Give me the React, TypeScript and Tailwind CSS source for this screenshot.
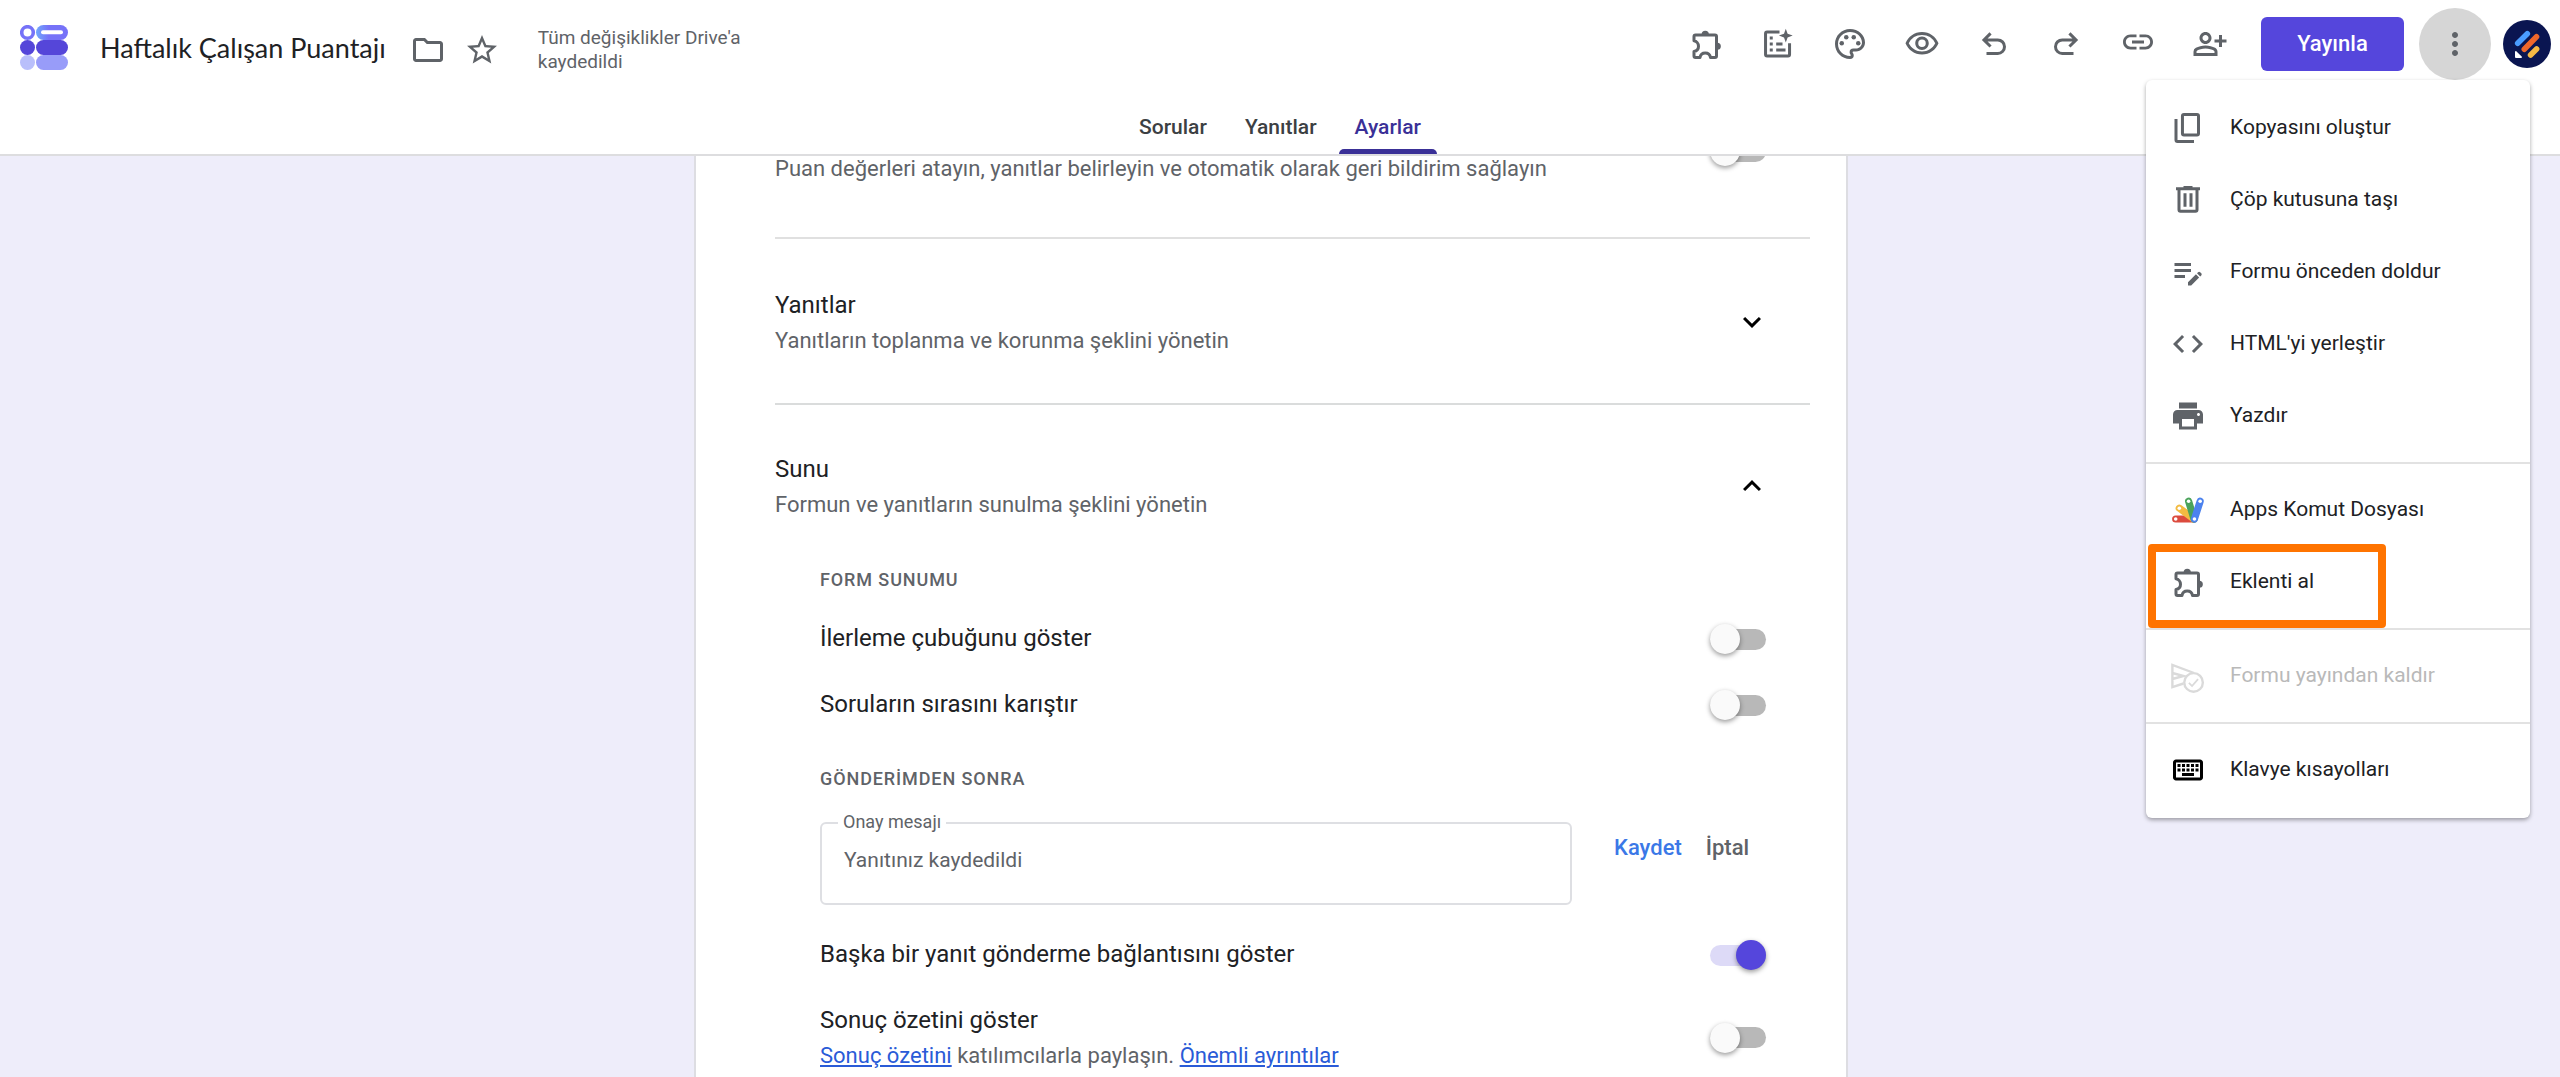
import { useState, type ReactNode } from "react";
import clsx from "clsx";
import {
  MdCode,
  MdExpandLess,
  MdExpandMore,
  MdLink,
  MdMoreVert,
  MdOutlineEditNote,
  MdOutlineFolder,
  MdOutlineKeyboard,
  MdOutlinePalette,
  MdOutlinePersonAddAlt,
  MdOutlineVisibility,
  MdPrint,
  MdStarBorder,
} from "react-icons/md";

const LineIcon = ({ children }: { children: ReactNode }) => (
  <svg
    className="size-9"
    viewBox="0 0 24 24"
    fill="none"
    stroke="currentColor"
    strokeWidth="2"
  >
    {children}
  </svg>
);

const PuzzleIcon = () => (
  <LineIcon>
    <path
      strokeLinejoin="round"
      d="M4 9.9V7a1 1 0 0 1 1-1h13a1 1 0 0 1 1 1v13a1 1 0 0 1-1 1h-3c-.3-1.7-1.6-3-3.500-3S8.300 19.300 8 21H5a1 1 0 0 1-1-1v-3c1.700-.3 3-1.700 3-3.500S5.700 10.200 4 9.900z"
    />
    <path
      stroke="none"
      fill="currentColor"
      d="M9.100 5.500a2.400 2.400 0 0 1 4.800 0zM19.500 11.100a2.400 2.400 0 0 1 0 4.800z"
    />
  </LineIcon>
);

const FormSparkIcon = () => (
  <LineIcon>
    <path d="M13 4H4.700a1 1 0 0 0-1 1v14a1 1 0 0 0 1 1h14a1 1 0 0 0 1-1v-7.500M10.800 12H15M10.800 16H17M6.500 8h2M6.500 12h2M6.500 16h2" />
    <path
      stroke="none"
      fill="currentColor"
      d="M17.200 1.800l1.200 3.400 3.400 1.200-3.400 1.200-1.200 3.400L16 7.600l-3.400-1.200L16 5.200z"
    />
  </LineIcon>
);

const UndoIcon = () => (
  <LineIcon>
    <path d="M5.300 9.300h9.200a4.500 4.500 0 0 1 0 9H7M9.700 4.900 5.300 9.300l4.400 4.400" />
  </LineIcon>
);

const RedoIcon = () => (
  <LineIcon>
    <path d="M18.700 9.300H9.500a4.500 4.500 0 0 0 0 9H17M14.300 4.900l4.400 4.400-4.400 4.400" />
  </LineIcon>
);

const CopyIcon = () => (
  <LineIcon>
    <rect x="8.300" y="3" width="10.700" height="13.600" rx="1" />
    <path d="M4 6v14a1 1 0 0 0 1 1h11" />
  </LineIcon>
);

const TrashIcon = () => (
  <LineIcon>
    <path d="M4 4.500h16M9 3.600h6M6 5v13.500a1 1 0 0 0 1 1h10a1 1 0 0 0 1-1V5M10 7.500v9M14 7.500v9" />
  </LineIcon>
);

const UnpublishIcon = () => (
  <LineIcon>
    <path
      strokeWidth="1.600"
      d="M9 17 1.600 19.400V4.600L16 10M1.600 4.600V10l7.400 2-7.400 2"
    />
    <circle cx="15.700" cy="16.300" r="6.200" strokeWidth="1.600" fill="#fff" />
    <path strokeWidth="1.200" d="m12.600 16.600 2.100 2.100 4-4.600" />
  </LineIcon>
);

const AppsScriptIcon = () => (
  <svg className="size-9" viewBox="0 0 24 24" strokeLinecap="round">
    <path stroke="#dc4b3e" strokeWidth="4.800" d="M3.800 18h12" />
    <path stroke="#f3bb42" strokeWidth="4.800" d="M6.200 10.800 16 18" />
    <path stroke="#4aa35a" strokeWidth="4.800" d="M12.400 6.200 16 18" />
    <path stroke="#4c82ee" strokeWidth="4.800" d="M20.100 6.200 16.300 18" />
    <g fill="#fff">
      <circle cx="3.800" cy="18" r="1.200" />
      <circle cx="6.200" cy="10.800" r="1.200" />
      <circle cx="12.400" cy="6.200" r="1.200" />
      <circle cx="20.100" cy="6.200" r="1.200" />
      <circle cx="16.300" cy="18" r="1.200" />
    </g>
  </svg>
);

const FormsLogo = () => (
  <svg className="h-[45px] w-12" viewBox="0 0 48 45">
    <defs>
      <linearGradient id="logoTop" x1="0" x2="1">
        <stop offset="0" stopColor="#6fa8fb" />
        <stop offset="0.4" stopColor="#7672f8" />
      </linearGradient>
    </defs>
    <circle cx="7.500" cy="7.500" r="5.800" fill="none" stroke="#7672f8" strokeWidth="3.600" />
    <rect x="16" width="32" height="15" rx="7.500" fill="url(#logoTop)" />
    <rect x="21" y="5.300" width="22" height="4" rx="2" fill="#fff" />
    <circle cx="7.500" cy="22.500" r="7.500" fill="#5546d9" />
    <rect x="16" y="15" width="32" height="15" rx="7.500" fill="#5546d9" />
    <circle cx="7.500" cy="37.500" r="7.500" fill="#b9bffb" />
    <rect x="16" y="30" width="32" height="15" rx="7.500" fill="#989cf9" />
  </svg>
);

const Avatar = () => (
  <svg className="size-12" viewBox="0 0 48 48" strokeLinecap="round">
    <circle cx="24" cy="24" r="24" fill="#0a1551" />
    <path stroke="#4a9cff" strokeWidth="5.600" d="m14.700 23.200 9.600-9.500" />
    <path stroke="#f0672b" strokeWidth="5.600" d="M21.300 29.200 33.500 16.800" />
    <path stroke="#f5b945" strokeWidth="5.600" d="m27.600 35 6-6" />
    <path fill="#fff" d="M12 32c0-.8.9-1.200 1.500-.6l5.200 5.200c.6.600.2 1.400-.6 1.400H13a1 1 0 0 1-1-1z" />
  </svg>
);

const toolbar = [
  { label: "Eklentiler", icon: <PuzzleIcon /> },
  { label: "Form oluştur", icon: <FormSparkIcon /> },
  { label: "Temayı özelleştir", icon: <MdOutlinePalette className="size-9" /> },
  { label: "Önizleme", icon: <MdOutlineVisibility className="size-9" /> },
  { label: "Geri al", icon: <UndoIcon /> },
  { label: "Yinele", icon: <RedoIcon /> },
  { label: "Bağlantıyı kopyala", icon: <MdLink className="mb-1 size-9" /> },
  { label: "Paylaş", icon: <MdOutlinePersonAddAlt className="size-9" /> },
];

const tabs = ["Sorular", "Yanıtlar", "Ayarlar"];

const Header = () => {
  const [activeTab, setActiveTab] = useState("Ayarlar");

  return (
    <header className="z-10 shrink-0 border-b-2 border-[#dddddf] bg-white">
      <div className="flex h-[87px] items-center justify-between pr-[9px] pl-5">
        <div className="flex items-center pt-3">
          <div className="pb-1">
            <FormsLogo />
          </div>
          <h1 className="ml-8 pb-1 font-['Lato',sans-serif] text-[27px] leading-9 text-[#202124]">
            Haftalık Çalışan Puantajı
          </h1>
          <button className="ml-6 text-[#5f6368]" aria-label="Taşı">
            <MdOutlineFolder className="size-9" />
          </button>
          <button className="ml-[18px] text-[#5f6368]" aria-label="Yıldız ekle">
            <MdStarBorder className="size-9" />
          </button>
          <p className="ml-[38px] w-60 text-[19px] leading-6 text-[#5f6368]">
            Tüm değişiklikler Drive'a kaydedildi
          </p>
        </div>
        <div className="flex items-center">
          <div className="flex gap-9 text-[#5f6368]">
            {toolbar.map(({ label, icon }) => (
              <button key={label} aria-label={label}>
                {icon}
              </button>
            ))}
          </div>
          <button className="ml-[33px] h-[54px] w-[143px] rounded-md bg-[#5546dc] text-[22px] font-medium text-white">
            Yayınla
          </button>
          <button
            className="ml-[15px] flex size-[72px] items-center justify-center rounded-full bg-[#d6d6d6] text-[#5f6368]"
            aria-label="Diğer"
          >
            <MdMoreVert className="size-9" />
          </button>
          <button className="ml-3" aria-label="Hesap">
            <Avatar />
          </button>
        </div>
      </div>
      <nav className="flex h-[67px] items-end justify-center gap-[6px]">
        {tabs.map((tab) => (
          <button
            key={tab}
            onClick={() => setActiveTab(tab)}
            className={clsx(
              "flex flex-col items-stretch text-[21px] leading-[30px] font-medium",
              tab === activeTab ? "text-[#3a3097]" : "text-[#3c4043]"
            )}
          >
            <span className="px-4">{tab}</span>
            <span
              className={clsx(
                "mt-[7px] h-[5px] rounded-t-md",
                tab === activeTab && "bg-[#3a3097]"
              )}
            />
          </button>
        ))}
      </nav>
    </header>
  );
};

interface SwitchProps {
  id: string;
  label?: string;
  defaultChecked?: boolean;
}

const Switch = ({ id, label, defaultChecked }: SwitchProps) => (
  <label htmlFor={id} className="relative flex h-[30px] w-14 shrink-0 items-center">
    <input
      id={id}
      type="checkbox"
      role="switch"
      aria-label={label}
      defaultChecked={defaultChecked}
      className="peer sr-only"
    />
    <span className="h-[21px] w-full rounded-full bg-[#b8b8b8] peer-checked:bg-[#dddaf7]" />
    <span className="absolute left-0 size-[30px] rounded-full bg-[#fafafa] shadow-[0_2px_5px_rgba(0,0,0,0.4)] peer-checked:right-0 peer-checked:left-auto peer-checked:bg-[#5546dc]" />
  </label>
);

interface SectionHeaderProps {
  title: string;
  description: string;
  open?: boolean;
}

const SectionHeader = ({ title, description, open }: SectionHeaderProps) => (
  <div className="flex items-center justify-between pr-10">
    <div>
      <h2 className="text-2xl leading-9 text-[#202124]">{title}</h2>
      <p className="mt-[3px] text-[22px] leading-[30px] text-[#5f6368]">{description}</p>
    </div>
    <button aria-label={title} aria-expanded={open} className="text-black">
      {open ? <MdExpandLess className="size-9" /> : <MdExpandMore className="size-9" />}
    </button>
  </div>
);

const SettingRow = ({ id, label, defaultChecked }: SwitchProps) => (
  <div className="flex h-[66px] items-center justify-between">
    <label htmlFor={id} className="pb-[2px] text-2xl leading-9 text-[#202124]">
      {label}
    </label>
    <Switch id={id} label={label} defaultChecked={defaultChecked} />
  </div>
);

const GroupTitle = ({ children }: { children: ReactNode }) => (
  <h3 className="text-lg leading-6 font-medium tracking-wider text-[#5f6368]">{children}</h3>
);

const Settings = () => (
  <div className="-mt-5 w-full max-w-[1154px] border-x-2 border-[#dddde2] bg-white pr-9 pl-[79px]">
    <section className="flex items-start justify-between border-b-2 border-[#e0e0e0] pr-11 pb-[53px]">
      <p className="pt-[18px] text-[22px] leading-[30px] text-[#5f6368]">
        Puan değerleri atayın, yanıtlar belirleyin ve otomatik olarak geri bildirim sağlayın
      </p>
      <Switch id="quiz" label="Test" />
    </section>

    <section className="border-b-2 border-[#dadcdc] pt-12 pb-[47px]">
      <SectionHeader
        title="Yanıtlar"
        description="Yanıtların toplanma ve korunma şeklini yönetin"
      />
    </section>

    <section className="pt-[46px]">
      <SectionHeader
        open
        title="Sunu"
        description="Formun ve yanıtların sunulma şeklini yönetin"
      />
      <div className="pt-12 pr-11 pb-12 pl-[45px]">
        <GroupTitle>FORM SUNUMU</GroupTitle>
        <div className="mt-[14px]">
          <SettingRow id="progress" label="İlerleme çubuğunu göster" />
          <SettingRow id="shuffle" label="Soruların sırasını karıştır" />
        </div>

        <div className="mt-[29px]">
          <GroupTitle>GÖNDERİMDEN SONRA</GroupTitle>
        </div>
        <form
          className="mt-[31px] flex items-start"
          onSubmit={(event) => event.preventDefault()}
        >
          <div className="relative flex flex-1">
            <label
              htmlFor="message"
              className="absolute -top-3 left-[18px] bg-white px-[5px] text-lg leading-6 text-[#5f6368]"
            >
              Onay mesajı
            </label>
            <textarea
              id="message"
              defaultValue="Yanıtınız kaydedildi"
              className="h-[83px] w-full resize-none rounded-md border-2 border-[#dedfe3] px-[22px] pt-[21px] text-[21px] leading-[30px] text-[#5f6368]"
            />
          </div>
          <div className="mt-[11px] ml-[42px] flex w-[152px] gap-6 text-[22px] leading-[30px] font-medium">
            <button type="submit" className="text-[#3b78e7]">
              Kaydet
            </button>
            <button type="button" className="text-[#5f6368]">
              İptal
            </button>
          </div>
        </form>

        <div className="mt-[17px]">
          <SettingRow id="resubmit" label="Başka bir yanıt gönderme bağlantısını göster" defaultChecked />
        </div>
        <div className="flex items-center justify-between pt-[14px]">
          <div className="pb-[2px]">
            <label htmlFor="summary" className="block text-2xl leading-9 text-[#202124]">
              Sonuç özetini göster
            </label>
            <p className="mt-[3px] text-[22px] leading-[30px] text-[#5f6368]">
              <a href="#ozet" className="text-[#2a5bd7] underline">
                Sonuç özetini
              </a>{" "}
              katılımcılarla paylaşın.{" "}
              <a href="#ayrintilar" className="text-[#2a5bd7] underline">
                Önemli ayrıntılar
              </a>
            </p>
          </div>
          <Switch id="summary" label="Sonuç özetini göster" />
        </div>
      </div>
    </section>
  </div>
);

interface MenuItem {
  label: string;
  icon: ReactNode;
  disabled?: boolean;
  highlighted?: boolean;
}

const menuGroups: MenuItem[][] = [
  [
    { label: "Kopyasını oluştur", icon: <CopyIcon /> },
    { label: "Çöp kutusuna taşı", icon: <TrashIcon /> },
    { label: "Formu önceden doldur", icon: <MdOutlineEditNote className="size-9" /> },
    { label: "HTML'yi yerleştir", icon: <MdCode className="size-9" /> },
    { label: "Yazdır", icon: <MdPrint className="size-9" /> },
  ],
  [
    { label: "Apps Komut Dosyası", icon: <AppsScriptIcon /> },
    { label: "Eklenti al", icon: <PuzzleIcon />, highlighted: true },
  ],
  [{ label: "Formu yayından kaldır", icon: <UnpublishIcon />, disabled: true }],
  [
    {
      label: "Klavye kısayolları",
      icon: <MdOutlineKeyboard className="size-9 text-black" />,
    },
  ],
];

const MoreMenu = () => (
  <div
    role="menu"
    className="absolute top-20 right-[30px] z-20 w-96 divide-y-2 divide-[#e2e2e2] rounded-md bg-white py-[2px] shadow-[0_2px_4px_rgba(0,0,0,0.35)]"
  >
    {menuGroups.map((group, index) => (
      <div key={index} className="py-[10px]">
        {group.map(({ label, icon, disabled, highlighted }) => (
          <button
            key={label}
            role="menuitem"
            disabled={disabled}
            className="relative flex h-[72px] w-full items-center gap-6 pl-6 text-left text-[21px]"
          >
            <span className={disabled ? "text-[#dadada]" : "text-[#5f6368]"}>{icon}</span>
            <span className={disabled ? "text-[#b9b9b9]" : "text-[#202124]"}>{label}</span>
            {highlighted && (
              <span className="absolute -top-[2px] left-[2px] h-[84px] w-[238px] rounded border-8 border-[#ff7400]" />
            )}
          </button>
        ))}
      </div>
    ))}
  </div>
);

const App = () => {
  return (
    <div className="relative flex h-screen flex-col overflow-hidden bg-[#eeedfa] font-['Roboto',sans-serif]">
      <Header />
      <main className="flex flex-1 items-start justify-center overflow-hidden pr-[18px]">
        <Settings />
      </main>
      <MoreMenu />
    </div>
  );
};

export default App;
